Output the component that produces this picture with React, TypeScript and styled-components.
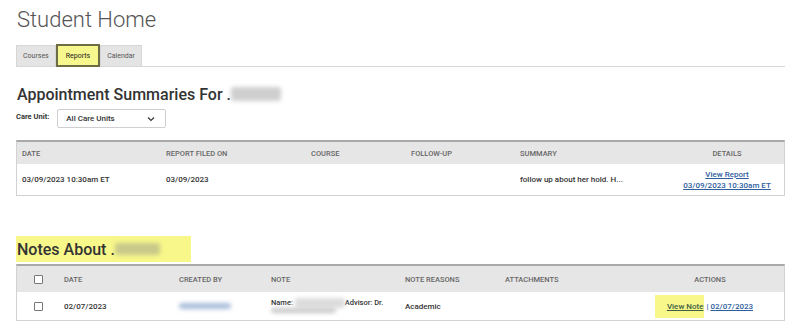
import React from "react";
import styled, { createGlobalStyle } from "styled-components";

const Global = createGlobalStyle`
  html, body { margin: 0; padding: 0; background: #fff; }
  body { font-family: Roboto, "Noto Sans", Arial, sans-serif; color: #333; }
`;

const Page = styled.div`
  width: 800px;
  height: 334px;
  padding: 6px 15px 0 16px;
  box-sizing: border-box;
  overflow: hidden;
`;

const Title = styled.h1`
  margin: 0 0 0 1px;
  font-size: 22px;
  font-weight: 300;
  color: #555;
  line-height: 28px;
`;

const TabBar = styled.div`
  display: flex;
  margin-top: 11px;
  border-bottom: 1px solid #d6d6d6;
  height: 21px;
`;

const Tab = styled.div<{ $active?: boolean }>`
  display: flex;
  align-items: center;
  justify-content: center;
  box-sizing: border-box;
  height: ${(p) => (p.$active ? "23px" : "21px")};
  margin-top: ${(p) => (p.$active ? "-1px" : "0")};
  padding: 0 ${(p) => (p.$active ? "8px" : "6px")};
  font-size: 7px;
  color: ${(p) => (p.$active ? "#222" : "#555")};
  background: ${(p) => (p.$active ? "#f6f78c" : "#e4e4e4")};
  border: ${(p) => (p.$active ? "2px solid #6d6d45" : "1px solid #d6d6d6")};
  border-bottom: ${(p) => (p.$active ? "2px solid #6d6d45" : "none")};
  position: relative;
  z-index: ${(p) => (p.$active ? 1 : 0)};
`;

const SectionTitle = styled.h2<{ $highlight?: boolean }>`
  display: flex;
  align-items: center;
  margin: 0;
  font-size: 16px;
  font-weight: 500;
  color: #333;
  width: ${(p) => (p.$highlight ? "174px" : "auto")};
  background: ${(p) => (p.$highlight ? "#f7f78a" : "transparent")};
  height: 26px;
  padding-left: 1px;
`;

const Blur = styled.span<{ $w: number; $h: number; $c?: string }>`
  display: inline-block;
  width: ${(p) => p.$w}px;
  height: ${(p) => p.$h}px;
  background: ${(p) => p.$c || "#cfcfcf"};
  filter: blur(2px);
  border-radius: 3px;
  vertical-align: middle;
`;

const Dot = styled.span`
  margin-left: 4px;
`;

const FilterRow = styled.div`
  display: flex;
  align-items: center;
  gap: 8px;
  margin-top: 2px;
`;

const Label = styled.span`
  font-size: 7.5px;
  font-weight: 700;
  color: #333;
  margin-top: -4px;
`;

const Select = styled.div`
  width: 109px;
  height: 19px;
  box-sizing: border-box;
  border: 1px solid #cfcfcf;
  border-radius: 2px;
  display: flex;
  align-items: center;
  justify-content: space-between;
  padding: 0 10px 0 8px;
  font-size: 8px;
  font-weight: 500;
  color: #333;
`;

const Table = styled.div<{ $cols: string }>`
  display: grid;
  grid-template-columns: ${(p) => p.$cols};
  border: 1px solid #d2d2d2;
  border-top: 2px solid #a9a9a9;
`;

const HeadCell = styled.div<{ $h: number; $center?: boolean }>`
  height: ${(p) => p.$h}px;
  background: #e6e6e6;
  display: flex;
  align-items: center;
  justify-content: ${(p) => (p.$center ? "center" : "flex-start")};
  padding-left: ${(p) => (p.$center ? "0" : "5px")};
  font-size: 7.5px;
  font-weight: 500;
  color: #666;
  text-transform: uppercase;
`;

const Cell = styled.div<{ $h: number; $center?: boolean; $col?: boolean }>`
  height: ${(p) => p.$h}px;
  display: flex;
  flex-direction: ${(p) => (p.$col ? "column" : "row")};
  align-items: center;
  justify-content: ${(p) => (p.$center || p.$col ? "center" : "flex-start")};
  padding-left: ${(p) => (p.$center ? "0" : "5px")};
  font-size: 8px;
  font-weight: 500;
  color: #333;
`;

const Link = styled.a<{ $hl?: boolean }>`
  color: ${(p) => (p.$hl ? "#3f5e45" : "#2f5e9e")};
  text-decoration: underline;
  line-height: 11px;
  font-size: 8px;
  background: ${(p) => (p.$hl ? "#f7f78a" : "transparent")};
  padding: ${(p) => (p.$hl ? "6px 1px 6px 12px" : "0")};
  margin-left: ${(p) => (p.$hl ? "-12px" : "0")};
`;

const Check = styled.span`
  width: 7px;
  height: 7px;
  border: 1px solid #777;
  border-radius: 1px;
  background: #fff;
  display: inline-block;
`;

const NoteText = styled.div`
  font-size: 7.5px;
  line-height: 11px;
  display: flex;
  flex-direction: column;
  margin-top: -2px;
`;

const Line = styled.div`
  display: flex;
  align-items: center;
`;

const Gap = styled.div<{ $h: number }>`
  height: ${(p) => p.$h}px;
`;

const Sep = styled.span`
  color: #2f5e9e;
  margin: 0 2px;
  font-size: 8px;
`;

const Chevron = () => (
  <svg width="8" height="6" viewBox="0 0 8 6">
    <path d="M1 1.5 L4 4.5 L7 1.5" fill="none" stroke="#333" strokeWidth="1.2" />
  </svg>
);

export default function App() {
  return (
    <Page>
      <Global />
      <Title>Student Home</Title>
      <TabBar>
        <Tab>Courses</Tab>
        <Tab $active>Reports</Tab>
        <Tab>Calendar</Tab>
      </TabBar>
      <Gap $h={14} />
      <SectionTitle>
        Appointment Summaries For<Dot>.</Dot>
        <Blur $w={50} $h={14} />
      </SectionTitle>
      <FilterRow>
        <Label>Care Unit:</Label>
        <Select>
          All Care Units <Chevron />
        </Select>
      </FilterRow>
      <Gap $h={12} />
      <Table $cols="144px 145px 100px 109px 155px 1fr">
        <HeadCell $h={22}>Date</HeadCell>
        <HeadCell $h={22}>Report Filed On</HeadCell>
        <HeadCell $h={22}>Course</HeadCell>
        <HeadCell $h={22}>Follow-Up</HeadCell>
        <HeadCell $h={22}>Summary</HeadCell>
        <HeadCell $h={22} $center>Details</HeadCell>
        <Cell $h={31}>03/09/2023 10:30am ET</Cell>
        <Cell $h={31}>03/09/2023</Cell>
        <Cell $h={31}></Cell>
        <Cell $h={31}></Cell>
        <Cell $h={31}>follow up about her hold. H...</Cell>
        <Cell $h={31} $center $col>
          <Link>View Report</Link>
          <Link>03/09/2023 10:30am ET</Link>
        </Cell>
      </Table>
      <Gap $h={40} />
      <SectionTitle $highlight>
        Notes About<Dot>.</Dot>
        <Blur $w={45} $h={12} $c="#c9c98a" />
      </SectionTitle>
      <Gap $h={2} />
      <Table $cols="42px 115px 92px 134px 100px 136px 1fr">
        <HeadCell $h={26} $center>
          <Check />
        </HeadCell>
        <HeadCell $h={26}>Date</HeadCell>
        <HeadCell $h={26}>Created By</HeadCell>
        <HeadCell $h={26}>Note</HeadCell>
        <HeadCell $h={26}>Note Reasons</HeadCell>
        <HeadCell $h={26}>Attachments</HeadCell>
        <HeadCell $h={26} $center>Actions</HeadCell>
        <Cell $h={28} $center>
          <Check />
        </Cell>
        <Cell $h={28}>02/07/2023</Cell>
        <Cell $h={28}>
          <Blur $w={52} $h={6} $c="#a9bedb" />
        </Cell>
        <Cell $h={28}>
          <NoteText>
            <Line>
              Name:&nbsp;
              <Blur $w={50} $h={10} $c="#dcdcdc" />
              Advisor: Dr.
            </Line>
            <Line>
              <Blur $w={65} $h={5} $c="#c8c8c8" />
            </Line>
          </NoteText>
        </Cell>
        <Cell $h={28}>Academic</Cell>
        <Cell $h={28}></Cell>
        <Cell $h={28} $center>
          <Line>
            <Link $hl>View Note</Link>
            <Sep>|</Sep>
            <Link>02/07/2023</Link>
          </Line>
        </Cell>
      </Table>
    </Page>
  );
}
